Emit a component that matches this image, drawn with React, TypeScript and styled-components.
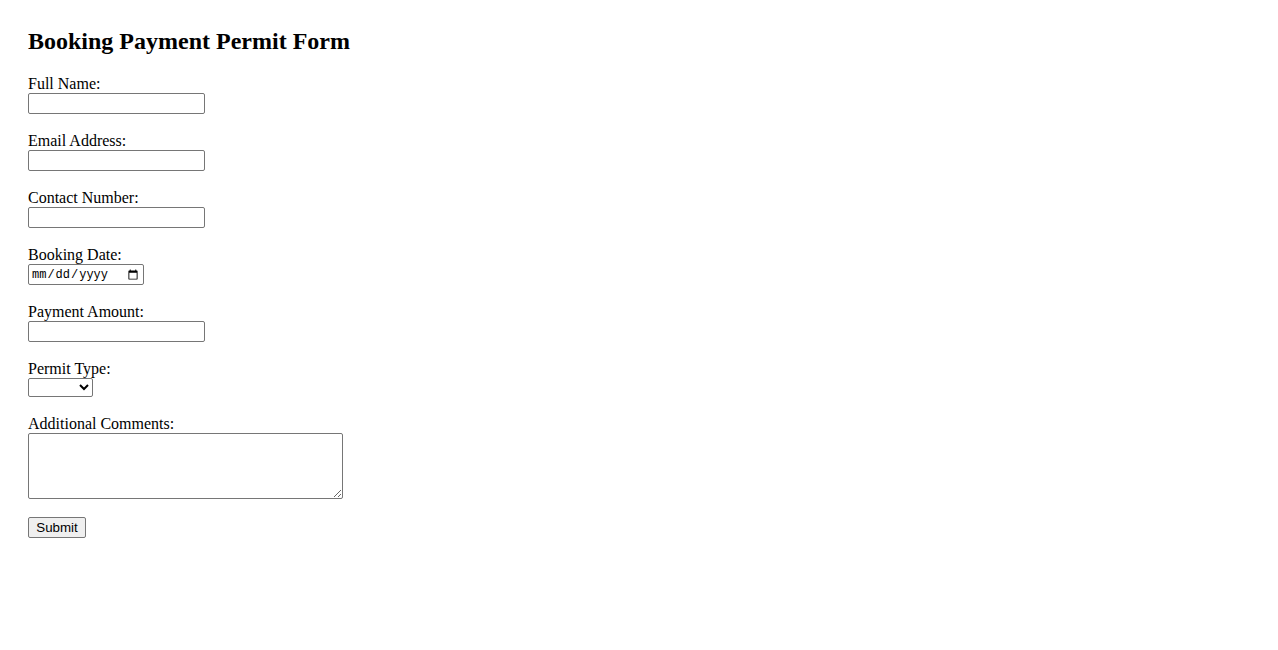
import React from "react";
import styled, { createGlobalStyle } from "styled-components";

const Global = createGlobalStyle`
  html, body { margin: 0; padding: 0; background: #ffffff; }
  body { font-family: "Liberation Serif", "Times New Roman", serif; font-size: 16px; color: #000; }
`;

const Page = styled.div`
  padding: 28px 28px;
`;

const Title = styled.h2`
  margin: 0 0 20px 0;
  font-size: 24px;
  font-weight: bold;
  line-height: 27px;
`;

const Form = styled.form`
  display: flex;
  flex-direction: column;
  align-items: flex-start;
`;

const Field = styled.div`
  display: flex;
  flex-direction: column;
  align-items: flex-start;
  margin-bottom: 18px;
`;

const Label = styled.label`
  display: block;
  line-height: 18px;
  height: 18px;
`;

const controlBase = `
  box-sizing: border-box;
  border: 1px solid #767676;
  border-radius: 2px;
  background: #ffffff;
  margin: 0;
  font-family: "Liberation Sans", Arial, sans-serif;
  font-size: 13.333px;
  color: #000;
`;

const TextInput = styled.input<{ $w: number }>`
  ${controlBase}
  width: ${(p) => p.$w}px;
  height: 21px;
  padding: 1px 2px;
`;

const DateInput = styled.input`
  ${controlBase}
  width: 116px;
  height: 21px;
  padding: 1px 2px;
  font-family: "Liberation Mono", "DejaVu Sans Mono", monospace;
  font-size: 12px;
`;

const Select = styled.select`
  ${controlBase}
  width: 65px;
  height: 19px;
  padding: 0 2px;
`;

const TextArea = styled.textarea`
  ${controlBase}
  width: 315px;
  height: 66px;
  padding: 2px;
  font-family: "Liberation Mono", monospace;
  resize: both;
`;

const SubmitButton = styled.button`
  box-sizing: border-box;
  width: 58px;
  height: 21px;
  padding: 1px 6px;
  border: 1px solid #767676;
  border-radius: 2px;
  background: #efefef;
  font-family: "Liberation Sans", Arial, sans-serif;
  font-size: 13.333px;
  color: #000;
  line-height: 17px;
`;

export default function App() {
  return (
    <>
      <Global />
      <Page>
        <Title>Booking Payment Permit Form</Title>
        <Form onSubmit={(e) => e.preventDefault()}>
          <Field>
            <Label htmlFor="name">Full Name:</Label>
            <TextInput id="name" type="text" $w={177} />
          </Field>
          <Field>
            <Label htmlFor="email">Email Address:</Label>
            <TextInput id="email" type="email" $w={177} />
          </Field>
          <Field>
            <Label htmlFor="phone">Contact Number:</Label>
            <TextInput id="phone" type="tel" $w={177} />
          </Field>
          <Field>
            <Label htmlFor="date">Booking Date:</Label>
            <DateInput id="date" type="date" />
          </Field>
          <Field>
            <Label htmlFor="amount">Payment Amount:</Label>
            <TextInput id="amount" type="number" $w={177} />
          </Field>
          <Field>
            <Label htmlFor="permit">Permit Type:</Label>
            <Select id="permit" defaultValue="">
              <option value=""></option>
              <option value="residential">Residential</option>
              <option value="commercial">Commercial</option>
            </Select>
          </Field>
          <Field>
            <Label htmlFor="comments">Additional Comments:</Label>
            <TextArea id="comments" rows={4} cols={40} />
          </Field>
          <SubmitButton type="submit">Submit</SubmitButton>
        </Form>
      </Page>
    </>
  );
}
